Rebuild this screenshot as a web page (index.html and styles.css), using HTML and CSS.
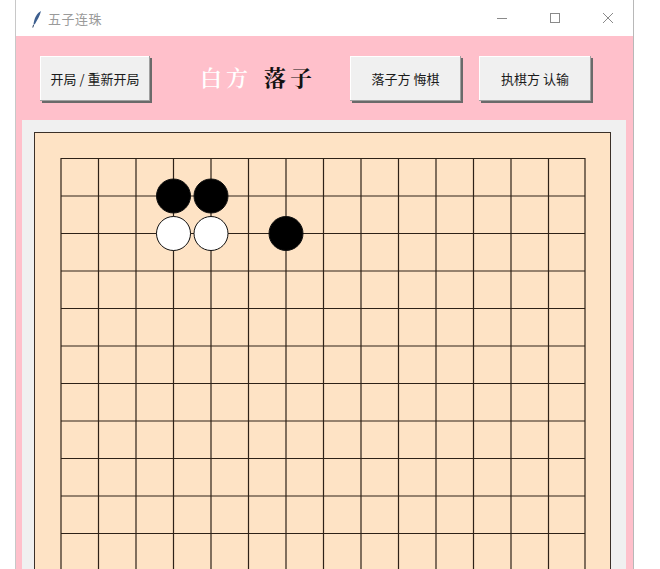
FILE: index.html
```html
<!DOCTYPE html>
<html lang="zh">
<head>
<meta charset="utf-8">
<title>五子连珠</title>
<link rel="stylesheet" href="styles.css">
</head>
<body>
<div class="window">
  <div class="titlebar">
    <svg class="feather" width="10" height="18" viewBox="0 0 10 18">
      <path d="M9 1 C5 3 2 8 1.5 15 L3 14 C5 10 8 6 9 1 Z" fill="#3d5f8f"/>
      <path d="M1.5 15 L0.8 17.5" stroke="#2a3f60" stroke-width="1"/>
    </svg>
    <span class="title">五子连珠</span>
    <div class="controls">
      <svg class="ctl" width="12" height="12" viewBox="0 0 12 12"><path d="M1 6.5 H11" stroke="#8a8a8a" stroke-width="1"/></svg>
      <svg class="ctl" width="12" height="12" viewBox="0 0 12 12"><rect x="1.5" y="1.5" width="9" height="9" fill="none" stroke="#8a8a8a" stroke-width="1"/></svg>
      <svg class="ctl" width="12" height="12" viewBox="0 0 12 12"><path d="M1 1 L11 11 M11 1 L1 11" stroke="#8a8a8a" stroke-width="1"/></svg>
    </div>
  </div>
  <div class="content">
    <div class="toolbar">
      <button class="btn btn-first">开局 / 重新开局</button>
      <div class="status"><span class="side">白方</span><span class="act">落子</span></div>
      <button class="btn btn-undo">落子方 悔棋</button>
      <button class="btn btn-resign">执棋方 认输</button>
    </div>
    <div class="frame">
      <svg class="board" width="577" height="577" viewBox="0 0 577 577">
        <rect x="0.5" y="0.5" width="576" height="576" fill="#fee3c5" stroke="#3b3028" stroke-width="1"/>
        <g stroke="#2e2218" stroke-width="1.2">
          <path d="M27 26.5 H551 M27 64 H551 M27 101.5 H551 M27 139 H551 M27 176.5 H551 M27 214 H551 M27 251.5 H551 M27 289 H551 M27 326.5 H551 M27 364 H551 M27 401.5 H551 M27 439 H551 M27 476.5 H551 M27 514 H551 M27 551.5 H551"/>
          <path d="M27 26 V552 M64.5 26 V552 M102 26 V552 M139.5 26 V552 M177 26 V552 M214.5 26 V552 M252 26 V552 M289.5 26 V552 M327 26 V552 M364.5 26 V552 M402 26 V552 M439.5 26 V552 M477 26 V552 M514.5 26 V552 M551 26 V552"/>
        </g>
        <g stroke="#111" stroke-width="1">
          <circle cx="139.5" cy="64" r="17" fill="#000"/>
          <circle cx="177" cy="64" r="17" fill="#000"/>
          <circle cx="139.5" cy="101.5" r="17" fill="#fff"/>
          <circle cx="177" cy="101.5" r="17" fill="#fff"/>
          <circle cx="252" cy="101.5" r="17" fill="#000"/>
        </g>
      </svg>
    </div>
  </div>
</div>
</body>
</html>
```
FILE: styles.css
```css
html, body {
  margin: 0;
  padding: 0;
  background: #ffffff;
  overflow: hidden;
}
body {
  font-family: "Noto Sans CJK SC", "Noto Sans", sans-serif;
}
.window {
  margin-left: 15px;
  width: 619px;
  height: 569px;
  border-left: 1px solid #c8c8c8;
  border-right: 1px solid #b8b8b8;
  box-sizing: border-box;
  overflow: hidden;
  background: #ffc0cb;
}
.titlebar {
  height: 36px;
  background: #ffffff;
  display: flex;
  align-items: center;
  padding-left: 16px;
}
.feather {
  margin-top: 1px;
}
.title {
  margin-left: 6px;
  font-size: 13px;
  color: #9a9a9a;
  letter-spacing: 0.5px;
}
.controls {
  margin-left: auto;
  display: flex;
  gap: 41px;
  padding-right: 19px;
}
.ctl {
  display: block;
}
.content {
  background: #ffc0cb;
  padding: 0 6px 0 6px;
}
.toolbar {
  height: 84px;
  display: flex;
  align-items: center;
  padding-left: 18px;
}
.btn {
  font-family: "Noto Sans CJK SC", sans-serif;
  font-size: 13px;
  color: #1a1a1a;
  background: #f0f0f0;
  height: 45px;
  border: 0;
  padding: 0;
  box-shadow: inset -1px -1px 0 #a0a0a0, inset 1px 1px 0 #ffffff, 2px 2px 0 #6a6a6a;
  margin-top: 1px;
}
.btn-first {
  width: 110px;
}
.status {
  margin-left: 50px;
  width: 150px;
  display: flex;
  align-items: center;
  gap: 12px;
  font-size: 22px;
  font-family: "Noto Serif CJK SC", "Noto Sans CJK SC", serif;
  margin-top: -4px;
}
.side {
  color: #ffffff;
  font-weight: 600;
  letter-spacing: 4px;
}
.act {
  color: #111111;
  font-weight: 700;
  letter-spacing: 4px;
}
.btn-undo {
  width: 111px;
}
.btn-resign {
  width: 112px;
  margin-left: 18px;
}
.frame {
  background: #f0f0f0;
  width: 604px;
  height: 460px;
  padding: 12px 0 0 12px;
  box-sizing: border-box;
}
.board {
  display: block;
}
```
